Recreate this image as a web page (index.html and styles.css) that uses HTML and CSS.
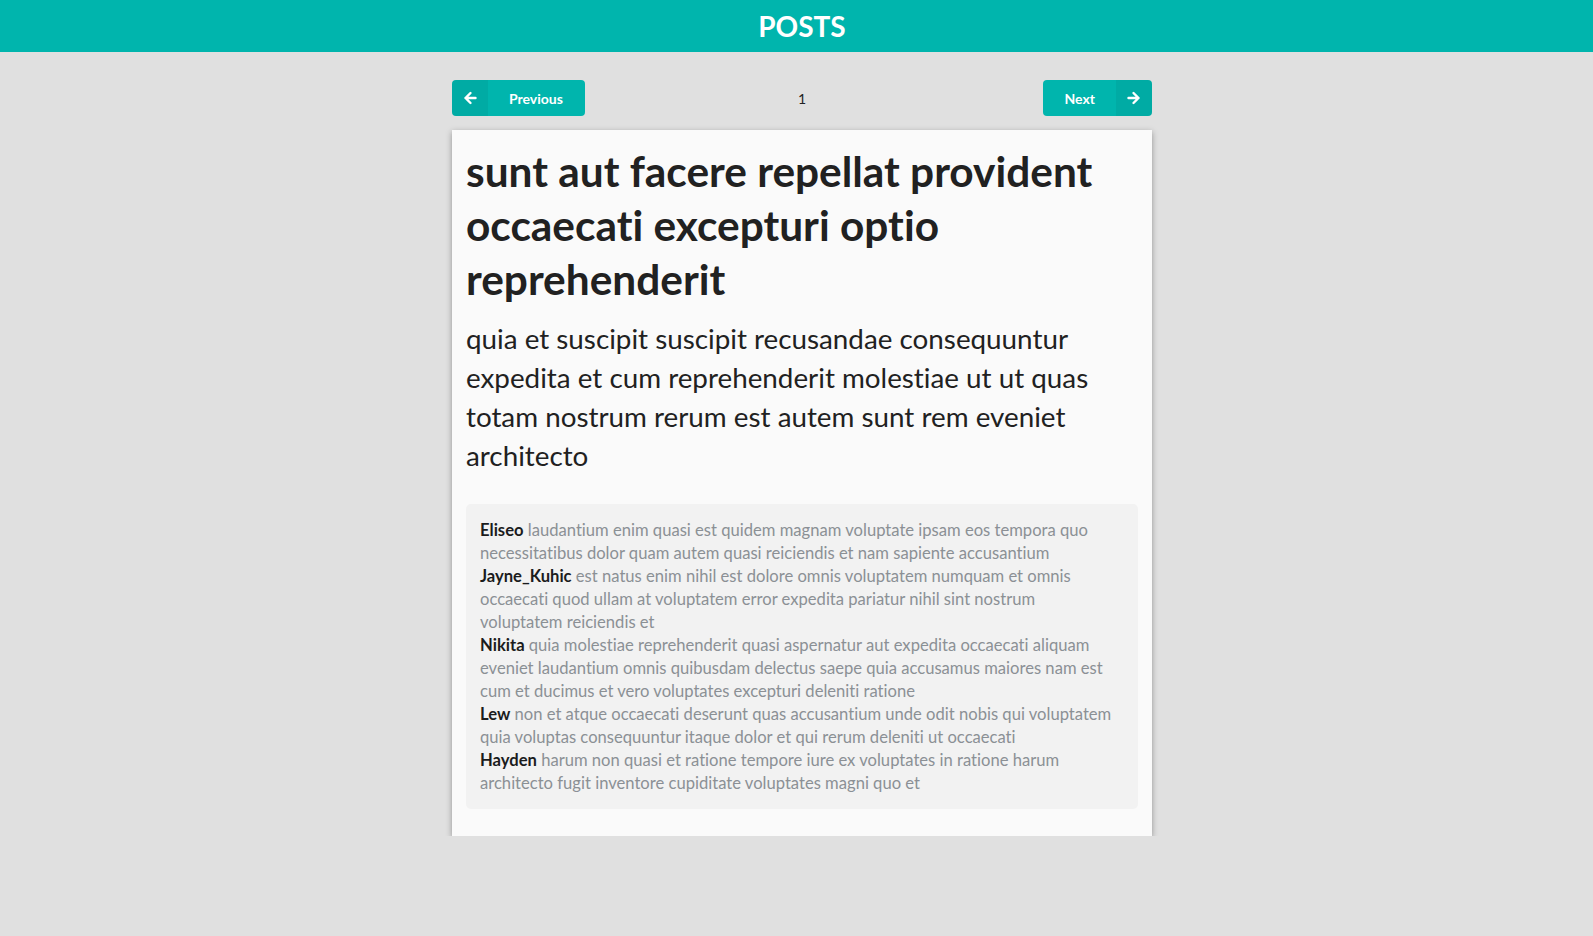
FILE: index.html
```html
<!DOCTYPE html>
<html lang="en">
<head>
    <meta charset="UTF-8">
    <meta name="viewport" content="width=device-width, initial-scale=1.0">
    <title>Posts</title>
    <link rel="stylesheet" href="styles.css">
</head>
<body>
    <header class="topbar">
        <h1 class="topbar-title">POSTS</h1>
    </header>

    <main class="page">
        <div class="container">
            <div class="pager">
                <div class="pager-left">
                    <button class="btn btn-left">
                        <span class="btn-icon">
                            <svg width="14" height="14" viewBox="0 0 14 14"><path d="M7.5 2 L2.5 7 L7.5 12 M2.5 7 H12.5" fill="none" stroke="#fff" stroke-width="2.4" stroke-linecap="round" stroke-linejoin="round"/></svg>
                        </span>
                        Previous
                    </button>
                </div>
                <span class="page-num">1</span>
                <div class="pager-right">
                    <button class="btn btn-right">
                        Next
                        <span class="btn-icon">
                            <svg width="14" height="14" viewBox="0 0 14 14"><path d="M6.5 2 L11.5 7 L6.5 12 M11.5 7 H1.5" fill="none" stroke="#fff" stroke-width="2.4" stroke-linecap="round" stroke-linejoin="round"/></svg>
                        </span>
                    </button>
                </div>
            </div>

            <article class="card">
                <h2 class="post-title">sunt aut facere repellat provident occaecati excepturi optio reprehenderit</h2>
                <p class="post-body">quia et suscipit suscipit recusandae consequuntur expedita et cum reprehenderit molestiae ut ut quas totam nostrum rerum est autem sunt rem eveniet architecto</p>

                <div class="comments">
                    <div class="comment"><b>Eliseo</b> laudantium enim quasi est quidem magnam voluptate ipsam eos tempora quo necessitatibus dolor quam autem quasi reiciendis et nam sapiente accusantium</div>
                    <div class="comment"><b>Jayne_Kuhic</b> est natus enim nihil est dolore omnis voluptatem numquam et omnis occaecati quod ullam at voluptatem error expedita pariatur nihil sint nostrum voluptatem reiciendis et</div>
                    <div class="comment"><b>Nikita</b> quia molestiae reprehenderit quasi aspernatur aut expedita occaecati aliquam eveniet laudantium omnis quibusdam delectus saepe quia accusamus maiores nam est cum et ducimus et vero voluptates excepturi deleniti ratione</div>
                    <div class="comment"><b>Lew</b> non et atque occaecati deserunt quas accusantium unde odit nobis qui voluptatem quia voluptas consequuntur itaque dolor et qui rerum deleniti ut occaecati</div>
                    <div class="comment"><b>Hayden</b> harum non quasi et ratione tempore iure ex voluptates in ratione harum architecto fugit inventore cupiditate voluptates magni quo et</div>
                </div>
            </article>
        </div>
    </main>
</body>
</html>
```

FILE: styles.css
```css
body {
    margin: 0;
    background: #e0e0e0;
    font-family: Lato, "Open Sans", sans-serif;
    font-variant-ligatures: none;
    color: #212121;
}

.topbar {
    background: #00b5ad;
    height: 52px;
    display: flex;
    align-items: center;
    justify-content: center;
    padding-left: 11px;
}

.topbar-title {
    margin: 0;
    color: #fff;
    font-size: 28px;
    font-weight: 700;
    line-height: 1;
}

.page {
    padding-left: 11px;
    padding-top: 28px;
}

.container {
    width: 700px;
    margin: 0 auto;
}

.pager {
    display: grid;
    grid-template-columns: 1fr auto 1fr;
    align-items: center;
    margin-bottom: 14px;
}

.pager-right {
    display: flex;
    justify-content: flex-end;
}

.page-num {
    font-size: 14px;
    color: #222;
}

.btn {
    position: relative;
    height: 36px;
    border: none;
    border-radius: 4px;
    background: #00b5ad;
    color: #fff;
    font-family: Lato, sans-serif;
    font-size: 14px;
    font-weight: 700;
    cursor: pointer;
}

.btn:hover {
    background: #009c95;
}

.btn-left {
    padding: 0 22px 0 57px;
}

.btn-right {
    padding: 0 57px 0 22px;
}

.btn-icon {
    position: absolute;
    top: 0;
    bottom: 0;
    width: 36px;
    display: flex;
    align-items: center;
    justify-content: center;
    background: rgba(0, 0, 0, 0.05);
}

.btn-left .btn-icon {
    left: 0;
    border-radius: 4px 0 0 4px;
}

.btn-right .btn-icon {
    right: 0;
    border-radius: 0 4px 4px 0;
}

.card {
    background: #fafafa;
    padding: 14px 14px 27px;
    box-shadow: 0 2px 6px rgba(0, 0, 0, 0.35);
}

.post-title {
    margin: 0 0 13px;
    font-size: 42.4px;
    line-height: 54px;
    font-weight: 700;
}

.post-body {
    margin: 0 0 29px;
    font-size: 27.8px;
    line-height: 39px;
    font-weight: 400;
}

.comments {
    background: #f2f2f2;
    border-radius: 5px;
    padding: 15px 20px 14px 14px;
    font-size: 16.6px;
    line-height: 23px;
    color: #8b9095;
}

.comment b {
    color: #1b1c1d;
    font-weight: 700;
}
```
